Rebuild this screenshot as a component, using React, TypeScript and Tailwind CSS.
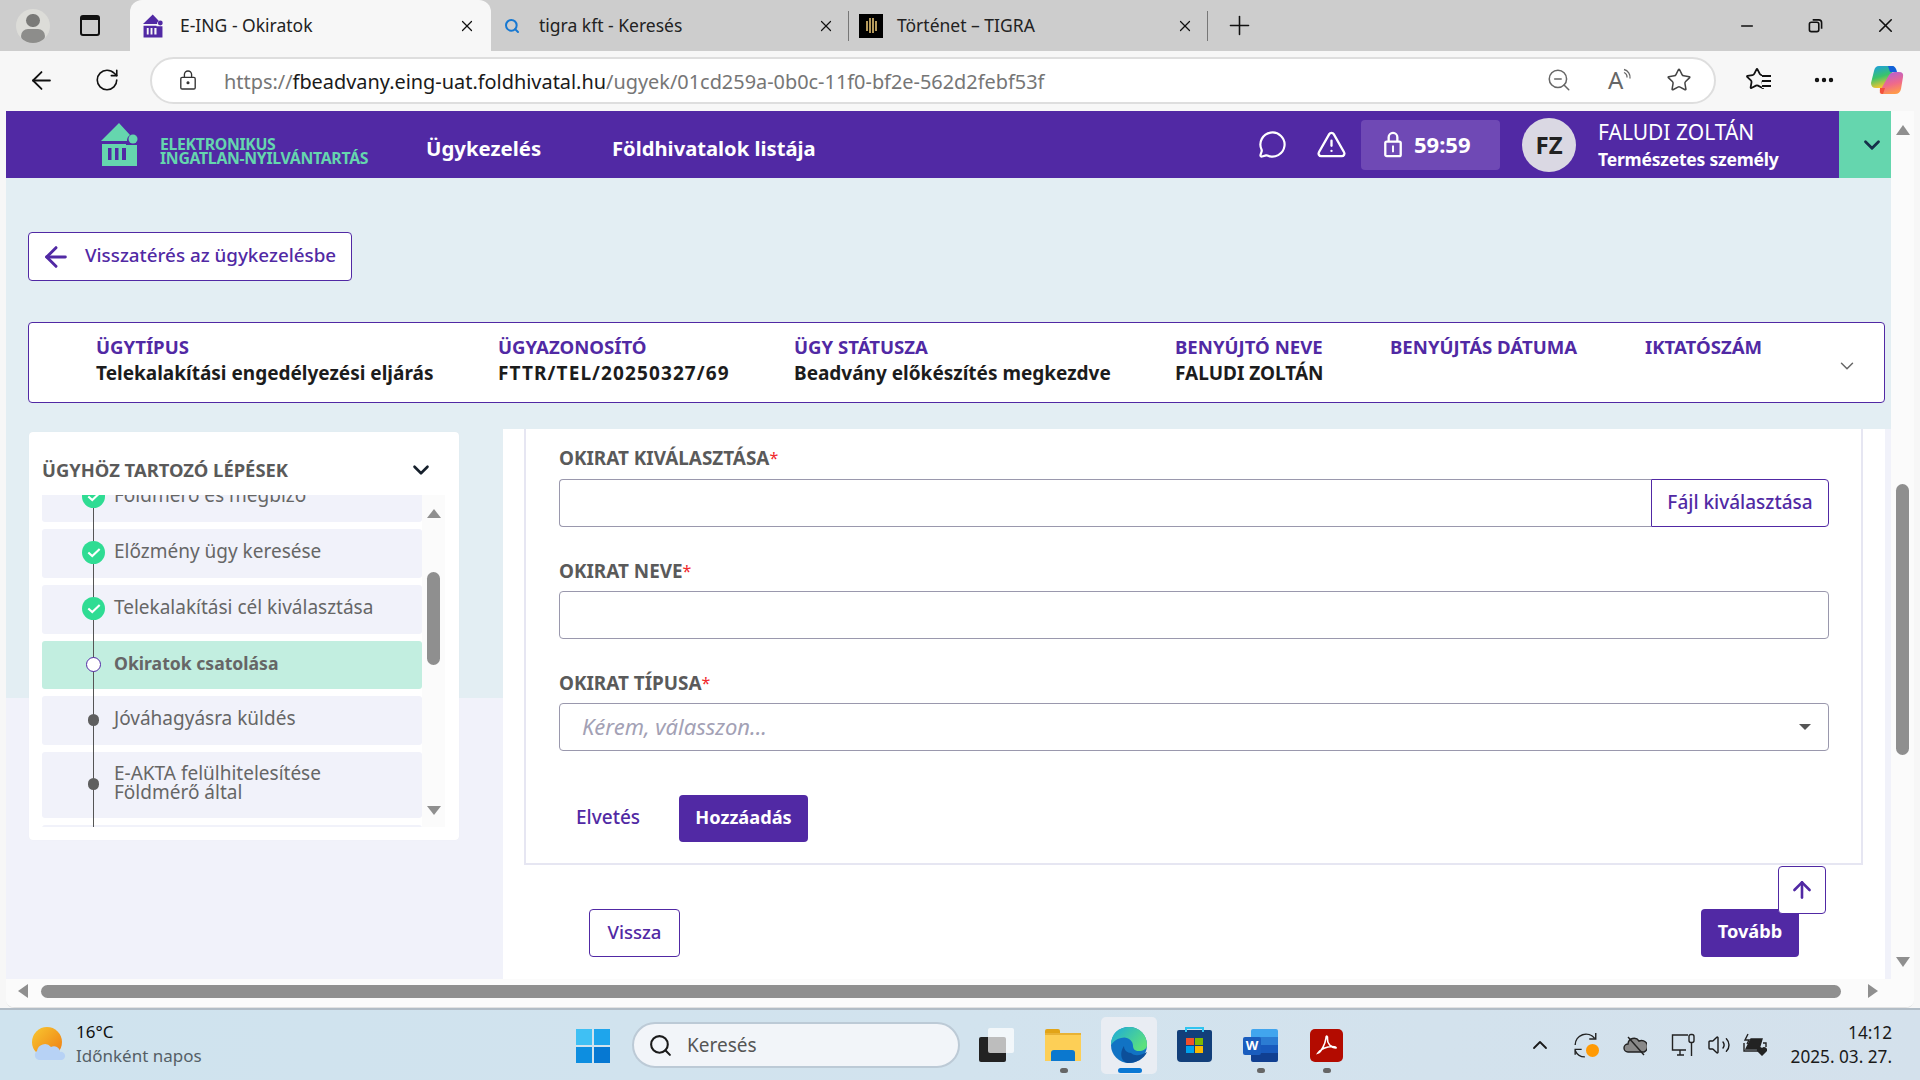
import { ArrowLeft, ArrowUp, ChevronDown, ChevronUp, MessageCircle, Minus, MoreHorizontal, Plus, RotateCw, Search, Star, TriangleAlert, Volume2, X, ZoomOut } from "lucide-react";

function HouseLogo({ color, className }: { color: string; className: string }) {
  return (
    <svg viewBox="0 0 37 43" className={className} fill={color}>
      <path d="M18 0 L29 12 A7 7 0 0 0 26 18 L0 18 Z" />
      <circle cx="32" cy="16" r="4.5" />
      <path d="M1 21 H25 V25 H21 V37 H25 V22 H28 V22 H36 V43 H1 Z M7 25 V37 H10.5 V25 Z M14 25 V37 H17.5 V25 Z" fillRule="evenodd" />
    </svg>
  );
}

function Tab({ active, width, title, icon, close }: { active?: boolean; width: string; title: string; icon: React.ReactNode; close: string }) {
  return (
    <div className={`${width} h-full flex items-center relative ${active ? "bg-[#f7f7f7] rounded-t-xl" : ""}`}>
      {icon}
      <span className="text-[17.5px] text-[#222]">{title}</span>
      <X className={`absolute ${close} w-[18px] h-[18px] text-[#111]`} strokeWidth={1.6} />
    </div>
  );
}

function TabStrip() {
  return (
    <div className="h-[51px] bg-[#cdcdcd] flex items-end shrink-0">
      <div className="w-[130px] h-full flex items-center">
        <div className="ml-[16px] w-[34px] h-[34px] rounded-full bg-[#dcdcd8] flex flex-col items-center overflow-hidden">
          <div className="mt-[5px] w-[14px] h-[15px] rounded-full bg-[#7a7a78]" />
          <div className="mt-[2px] w-[24px] h-[14px] rounded-full bg-[#8d8d8b]" />
        </div>
        <div className="ml-[30px] w-[20px] h-[21px] rounded-[3px] border-2 border-[#111] border-t-[5px]" />
      </div>
      <Tab active width="w-[361px]" title="E-ING - Okiratok" close="left-[328px]" icon={<HouseLogo color="#5129a4" className="ml-[13px] mr-[17px] w-[20px] h-[24px]" />} />
      <Tab width="w-[357px]" title="tigra kft - Keresés" close="left-[326px]" icon={<Search className="ml-[13px] mr-[19px] w-[16px] h-[16px] text-[#1678d2]" strokeWidth={3} />} />
      <div className="w-px h-[30px] bg-[#777] mb-[10px]" />
      <Tab width="w-[358px]" title="Történet – TIGRA" close="left-[327px]" icon={
        <div className="ml-[10px] mr-[14px] w-[24px] h-[24px] bg-black flex items-center justify-center gap-px">
          <div className="w-[2px] h-[10px] bg-[#b59a5c]" />
          <div className="w-[2px] h-[15px] bg-[#b59a5c]" />
          <div className="w-[2px] h-[15px] bg-[#b59a5c]" />
          <div className="w-[2px] h-[10px] bg-[#b59a5c]" />
        </div>
      } />
      <div className="w-px h-[30px] bg-[#777] mb-[10px]" />
      <div className="h-full flex items-center ml-[16px]">
        <Plus className="w-[31px] h-[31px] text-[#111]" strokeWidth={1.2} />
      </div>
      <div className="h-full flex items-center ml-auto">
        <Minus className="w-[18px] h-[18px] text-[#111] mr-[52px]" strokeWidth={2.2} />
        <svg viewBox="0 0 16 16" className="w-[15px] h-[15px] mr-[51px]" fill="none" stroke="#111" strokeWidth="1.7">
          <rect x="1.5" y="4.5" width="10" height="10" rx="2" />
          <path d="M5 2 H11.5 A3 3 0 0 1 14.5 5 V11.5" />
        </svg>
        <X className="w-[23px] h-[23px] text-[#111] mr-[23px]" strokeWidth={1.7} />
      </div>
    </div>
  );
}

function Toolbar() {
  return (
    <div className="h-[60px] flex items-center shrink-0 bg-[#f7f7f7] pb-[2px]">
      <ArrowLeft className="ml-[27px] w-[29px] h-[29px] text-[#111]" strokeWidth={1.5} />
      <RotateCw className="ml-[38px] w-[26px] h-[26px] text-[#111]" strokeWidth={1.5} />
      <div className="ml-[30px] w-[1566px] h-[47px] rounded-full bg-white border-2 border-[#dedede] flex items-center">
        <svg viewBox="0 0 20 24" className="ml-[27px] w-[18px] h-[22px]" fill="none" stroke="#333" strokeWidth="1.5">
          <rect x="2" y="9" width="16" height="13" rx="1.5" />
          <path d="M6 9 V6 A4 4 0 0 1 14 6 V9" />
          <circle cx="10" cy="15" r="1" fill="#333" />
        </svg>
        <span className="ml-[27px] mt-[4px] text-[19.9px] text-[#767676]">
          https://<span className="text-[#1a1a1a]">fbeadvany.eing-uat.foldhivatal.hu</span>/ugyek/01cd259a-0b0c-11f0-bf2e-562d2febf53f
        </span>
        <ZoomOut className="absolute left-[1546px] w-[26px] h-[26px] text-[#666]" strokeWidth={1.4} />
        <div className="absolute left-[1608px] flex items-start text-[#666]">
          <span className="text-[24px] leading-none">A</span>
          <svg viewBox="0 0 10 14" className="w-[10px] h-[15px]" fill="none" stroke="#666" strokeWidth="1.3">
            <path d="M1 1 A8 8 0 0 1 7 10 M1 4 A5 5 0 0 1 4 9" />
          </svg>
        </div>
        <Star className="absolute left-[1666px] w-[26px] h-[26px] text-[#444]" strokeWidth={1.4} />
      </div>
      <div className="ml-[29px] relative w-[26px] h-[26px]">
        <Star className="w-[24px] h-[24px] text-[#111]" strokeWidth={1.8} />
        <div className="absolute left-[17px] top-[7px] w-[9px] flex flex-col gap-[3px] bg-[#f7f7f7] py-px">
          <div className="h-[2px] bg-[#111]" />
          <div className="h-[2px] bg-[#111]" />
          <div className="h-[2px] bg-[#111]" />
        </div>
      </div>
      <MoreHorizontal className="ml-[41px] w-[24px] h-[24px] text-[#111]" strokeWidth={2.4} />
      <svg viewBox="0 0 34 32" className="ml-[34px] w-[34px] h-[32px]">
        <defs>
          <linearGradient id="cp1" x1="0" y1="0" x2="0.3" y2="1">
            <stop offset="0" stopColor="#1b9de8" />
            <stop offset="0.55" stopColor="#3bc46a" />
            <stop offset="1" stopColor="#f4c430" />
          </linearGradient>
          <linearGradient id="cp2" x1="0.2" y1="0" x2="0.5" y2="1">
            <stop offset="0" stopColor="#b05fd8" />
            <stop offset="0.6" stopColor="#f06a8a" />
            <stop offset="1" stopColor="#ff9a4a" />
          </linearGradient>
        </defs>
        <path d="M9 2 H22 Q25 2 24 5 L15 24 H6 Q1 24 1 19 L4 7 Q5 2 9 2 Z" fill="url(#cp1)" />
        <path d="M18 2 H23 Q26 3 27 8 H20 Z" fill="#1261d8" />
        <path d="M25 8 H29 Q34 8 33 13 L31 25 Q30 30 25 30 H12 Q9 30 10 27 L19 11 Q21 8 25 8 Z" fill="url(#cp2)" />
        <path d="M10 24 H15 L13 30 Q9 30 10 24 Z" fill="#f2503c" />
      </svg>
    </div>
  );
}

function AppHeader() {
  return (
    <div className="h-[67px] flex shrink-0">
      <div className="w-[1833px] bg-[#5129a4] flex items-center text-white">
        <HouseLogo color="#65d6ae" className="ml-[95px] w-[37px] h-[43px]" />
        <div className="ml-[22px] mt-[13px] w-[213px] text-[#65d6ae] text-[15.8px] font-bold leading-[14px] tracking-[-0.3px] whitespace-nowrap">
          <div>ELEKTRONIKUS</div>
          <div>INGATLAN-NYILVÁNTARTÁS</div>
        </div>
        <span className="ml-[53px] mt-[7px] w-[116px] text-[20.4px] font-bold whitespace-nowrap">Ügykezelés</span>
        <span className="ml-[70px] mt-[7px] w-[205px] text-[20.2px] font-bold whitespace-nowrap">Földhivatalok listája</span>
        <MessageCircle className="ml-[441px] w-[29px] h-[29px]" strokeWidth={1.8} />
        <TriangleAlert className="ml-[29px] w-[31px] h-[31px]" strokeWidth={1.8} />
        <div className="ml-[14px] w-[139px] h-[50px] rounded-[4px] bg-[#6f49b5] flex items-center">
          <svg viewBox="0 0 20 28" className="ml-[22px] w-[20px] h-[27px]" fill="none" stroke="white" strokeWidth="2.4">
            <rect x="2" y="11" width="16" height="15" rx="1.5" />
            <path d="M5.5 11 V6.5 A4.5 4.5 0 0 1 14.5 6.5 V11" />
            <path d="M10 15 V22" strokeWidth="2" />
          </svg>
          <span className="ml-[11px] text-[22px] font-bold">59:59</span>
        </div>
        <div className="ml-[22px] w-[54px] h-[54px] rounded-full bg-[#dad8e3] text-[#222] flex items-center justify-center text-[24px] font-bold">FZ</div>
        <div className="ml-[22px]">
          <div className="text-[21px] leading-[28px]">FALUDI ZOLTÁN</div>
          <div className="text-[17.5px] font-bold leading-[26px] tracking-[-0.2px]">Természetes személy</div>
        </div>
      </div>
      <div className="w-[52px] bg-[#65d6ae] flex items-center pl-[20px]">
        <ChevronDown className="w-[26px] h-[26px] text-[#16314a]" strokeWidth={2.6} />
      </div>
    </div>
  );
}

const infoColumns = [
  { label: "ÜGYTÍPUS", value: "Telekalakítási engedélyezési eljárás", width: "w-[402px]", valueClass: "" },
  { label: "ÜGYAZONOSÍTÓ", value: "FTTR/TEL/20250327/69", width: "w-[296px]", valueClass: "tracking-[1.1px]" },
  { label: "ÜGY STÁTUSZA", value: "Beadvány előkészítés megkezdve", width: "w-[381px]", valueClass: "" },
  { label: "BENYÚJTÓ NEVE", value: "FALUDI ZOLTÁN", width: "w-[215px]", valueClass: "" },
  { label: "BENYÚJTÁS DÁTUMA", value: "", width: "w-[255px]", valueClass: "" },
  { label: "IKTATÓSZÁM", value: "", width: "w-[190px]", valueClass: "" },
];

function InfoBox() {
  return (
    <div className="mt-[41px] w-[1857px] h-[81px] bg-white border border-[#5129a4] rounded-[4px] flex items-start pl-[67px] pt-[10px] relative">
      {infoColumns.map((c) => (
        <div key={c.label} className={`${c.width} shrink-0 leading-[27px]`}>
          <div className="text-[18.6px] font-bold text-[#5129a4]">{c.label}</div>
          <div className={`text-[19px] font-bold text-[#1c1c1c] ${c.valueClass}`}>{c.value}</div>
        </div>
      ))}
      <ChevronDown className="absolute left-[1807px] top-[32px] w-[22px] h-[22px] text-[#666]" strokeWidth={1.6} />
    </div>
  );
}

type StepState = "done" | "active" | "todo";

const steps: { text: React.ReactNode; state: StepState; height: string }[] = [
  { text: "Földmérő és megbízó", state: "done", height: "h-[49px]" },
  { text: "Előzmény ügy keresése", state: "done", height: "h-[49px]" },
  { text: "Telekalakítási cél kiválasztása", state: "done", height: "h-[49px]" },
  { text: "Okiratok csatolása", state: "active", height: "h-[48px]" },
  { text: "Jóváhagyásra küldés", state: "todo", height: "h-[49px]" },
  { text: <>E-AKTA felülhitelesítése<br />Földmérő által</>, state: "todo", height: "h-[66px]" },
  { text: "", state: "todo", height: "h-[49px]" },
];

function StepMarker({ state }: { state: StepState }) {
  if (state === "done") {
    return (
      <div className="w-[23px] h-[23px] rounded-full bg-[#2fdc93] flex items-center justify-center">
        <svg viewBox="0 0 16 12" className="w-[14px] h-[11px]" fill="none" stroke="white" strokeWidth="2.4">
          <path d="M1.5 6 L6 10 L14.5 2" />
        </svg>
      </div>
    );
  }
  if (state === "active") {
    return <div className="w-[15px] h-[15px] mx-[4px] rounded-full bg-white border border-[#5129a4]" />;
  }
  return <div className="w-[12px] h-[12px] mx-[6px] rounded-full bg-[#5f5f5f]" />;
}

function StepsPanel() {
  return (
    <div className="ml-[23px] mt-[3px] w-[430px] h-[408px] bg-white rounded-[4px] pl-[13px] shadow-[0_0_1px_rgba(0,0,0,0.05)]">
      <div className="h-[63px] pt-[12px] flex items-center justify-between pr-[25px]">
        <span className="text-[18.4px] font-bold text-[#5a5a5a]">ÜGYHÖZ TARTOZÓ LÉPÉSEK</span>
        <ChevronDown className="w-[26px] h-[26px] text-[#16202c]" strokeWidth={2.4} />
      </div>
      <div className="flex h-[332px] w-[403px] overflow-hidden">
        <div className="w-[380px] relative overflow-hidden">
          <div className="-mt-[22px] flex flex-col gap-[7px]">
            {steps.map((s, i) => (
              <div key={i} className={`${s.height} shrink-0 rounded-[3px] flex items-center pl-[40px] gap-[9px] ${s.state === "active" ? "bg-[#c2eee0]" : "bg-[#f1f2fa]"}`}>
                <div className="w-[23px] mb-[2px] flex justify-center relative z-10 shrink-0">
                  <StepMarker state={s.state} />
                </div>
                <span className={`mb-[4px] leading-[19px] text-[#666] ${s.state === "active" ? "text-[17.6px] font-bold text-[#555]" : "text-[19px]"}`}>{s.text}</span>
              </div>
            ))}
          </div>
          <div className="absolute left-[51px] top-0 bottom-0 w-px bg-[#555]" />
        </div>
        <div className="w-[23px] bg-[#fbfbfb] relative flex flex-col items-center">
          <div className="mt-[14px] w-0 h-0 border-x-[7px] border-x-transparent border-b-[9px] border-b-[#8f8f8f]" />
          <div className="mt-[54px] w-[13px] h-[93px] rounded-full bg-[#8f8f8f]" />
          <div className="mt-[141px] w-0 h-0 border-x-[7px] border-x-transparent border-t-[9px] border-t-[#8f8f8f]" />
        </div>
      </div>
    </div>
  );
}

function FieldLabel({ text }: { text: string }) {
  return (
    <div className="h-[22px] leading-[22px] text-[18.9px] font-bold text-[#5a5a5a]">
      {text}
      <span className="text-[#f0282d] align-top text-[16px] font-normal">*</span>
    </div>
  );
}

function FormCard() {
  return (
    <div className="ml-[21px] w-[1339px] h-[436px] border-x-2 border-b-2 border-[#e6e6f2] pl-[33px] pr-[32px] pt-[18px]">
      <FieldLabel text="OKIRAT KIVÁLASZTÁSA" />
      <div className="mt-[10px] h-[48px] flex">
        <div className="flex-1 border border-[#9a98ad] border-r-0 rounded-l-[4px]" />
        <div className="w-[178px] pb-[2px] border border-[#5129a4] rounded-r-[4px] flex items-center justify-center text-[19px] font-medium text-[#5129a4]">Fájl kiválasztása</div>
      </div>
      <div className="mt-[33px]">
        <FieldLabel text="OKIRAT NEVE" />
      </div>
      <div className="mt-[9px] h-[48px] border border-[#9a98ad] rounded-[4px]" />
      <div className="mt-[33px]">
        <FieldLabel text="OKIRAT TÍPUSA" />
      </div>
      <div className="mt-[9px] h-[48px] border border-[#9a98ad] rounded-[4px] flex items-center pl-[22px] pr-[17px]">
        <span className="mb-[2px] text-[22px] italic text-[#a3a1b5]">Kérem, válasszon...</span>
        <div className="ml-auto w-0 h-0 border-x-[6px] border-x-transparent border-t-[6px] border-t-[#555]" />
      </div>
      <div className="mt-[44px] flex items-center">
        <div className="w-[120px] pl-[17px] pb-[2px] text-[19px] font-medium text-[#5129a4]">Elvetés</div>
        <div className="w-[129px] h-[47px] pb-[2px] rounded-[4px] bg-[#5129a4] text-white flex items-center justify-center text-[18.2px] font-bold">Hozzáadás</div>
      </div>
    </div>
  );
}

function MainArea() {
  return (
    <div className="flex-1 flex flex-col min-w-0">
      <AppHeader />
      <div className="h-[251px] bg-[#e3eef3] px-[22px] pt-[54px] shrink-0">
        <div className="w-[324px] h-[49px] bg-white border border-[#5129a4] rounded-[4px] flex items-center pl-[11px] text-[#5129a4]">
          <ArrowLeft className="w-[32px] h-[32px]" strokeWidth={2.2} />
          <span className="ml-[13px] mb-[2px] text-[18.8px] font-medium">Visszatérés az ügykezelésbe</span>
        </div>
        <InfoBox />
      </div>
      <div className="h-[550px] flex shrink-0">
        <div className="w-[497px] bg-[linear-gradient(#e3eef3_269px,#f1f2fa_269px)]">
          <StepsPanel />
        </div>
        <div className="flex-1 bg-white border-r-[6px] border-[#f1f2fa] relative">
          <FormCard />
          <div className="mt-[44px] ml-[86px] w-[1210px] flex justify-between">
            <div className="w-[91px] h-[48px] pb-[2px] bg-white border border-[#5129a4] rounded-[4px] flex items-center justify-center text-[18.6px] font-medium text-[#5129a4]">Vissza</div>
            <div className="w-[98px] h-[48px] pb-[2px] bg-[#5129a4] rounded-[4px] flex items-center justify-center text-[18.2px] font-bold text-white">Tovább</div>
          </div>
          <div className="absolute left-[1275px] top-[437px] w-[48px] h-[48px] bg-white border border-[#5129a4] rounded-[4px] flex items-center justify-center">
            <ArrowUp className="w-[26px] h-[26px] text-[#5129a4]" strokeWidth={2.4} />
          </div>
        </div>
      </div>
    </div>
  );
}

function VerticalScrollbar() {
  return (
    <div className="w-[23px] flex flex-col items-center bg-[#fbfbfb]">
      <div className="mt-[14px] w-0 h-0 border-x-[7px] border-x-transparent border-b-[10px] border-b-[#8f8f8f]" />
      <div className="mt-[349px] w-[13px] h-[271px] rounded-full bg-[#8f8f8f]" />
      <div className="mt-[202px] w-0 h-0 border-x-[7px] border-x-transparent border-t-[10px] border-t-[#8f8f8f]" />
    </div>
  );
}

function HorizontalScrollbar() {
  return (
    <div className="h-[29px] flex items-center pb-[4px] bg-[#fbfbfb]">
      <div className="ml-[12px] w-0 h-0 border-y-[7px] border-y-transparent border-r-[10px] border-r-[#8f8f8f]" />
      <div className="ml-[13px] w-[1800px] h-[13px] rounded-full bg-[#8f8f8f]" />
      <div className="ml-[27px] w-0 h-0 border-y-[7px] border-y-transparent border-l-[10px] border-l-[#8f8f8f]" />
    </div>
  );
}

function TaskIcons() {
  return (
    <div className="flex items-center absolute left-[979px] top-0 h-full">
      {/* task view */}
      <div className="w-[35px] h-[34px] relative">
        <div className="absolute left-0 bottom-0 w-[27px] h-[25px] bg-[#222] rounded-[2px]" />
        <div className="absolute right-0 top-0 w-[26px] h-[25px] bg-white/70 rounded-[2px]" />
      </div>
      {/* folder */}
      <div className="ml-[31px] w-[36px] h-[32px] relative">
        <div className="absolute left-0 top-0 w-[15px] h-[8px] bg-[#e2a417] rounded-t-[2px]" />
        <div className="absolute left-0 top-[4px] right-0 bottom-0 bg-[#fdcf56] border-t-2 border-[#e8b235]" />
        <div className="absolute left-[6px] right-[6px] bottom-0 h-[11px] bg-[#0b78cf] rounded-t-[3px]" />
      </div>
      {/* edge */}
      <div className="ml-[20px] w-[56px] h-[57px] bg-[#e9edf3] rounded-[5px] flex items-center justify-center relative">
        <svg viewBox="0 0 36 36" className="w-[36px] h-[36px]">
          <defs>
            <linearGradient id="edge1" x1="0" y1="0" x2="1" y2="0.6">
              <stop offset="0" stopColor="#1ba9dd" />
              <stop offset="1" stopColor="#5be07e" />
            </linearGradient>
          </defs>
          <circle cx="18" cy="18" r="18" fill="#1173c4" />
          <path d="M0 18 C0 6 8 0 18 0 C29 0 36 8 36 18 C36 22 32 24 28 24 C24 24 22 22 22 19 C22 13 16 9 10 11 C5 12 2 15 0 18 Z" fill="url(#edge1)" />
          <path d="M20 26 C24 30 31 28 36 25 C33 32 25 36 18 36 C10 36 8 26 13 19 C13 23 16 26 20 26 Z" fill="#0c4f9a" />
        </svg>
        <div className="absolute bottom-[1px] left-[17px] w-[24px] h-[5px] rounded-full bg-[#0a78d4]" />
      </div>
      {/* store */}
      <div className="ml-[20px] mt-[2px] w-[35px] h-[32px] bg-[#123f7a] rounded-b-[4px] rounded-t-[2px] relative grid grid-cols-2 gap-px p-[9px] pt-[8px]">
        <div className="absolute left-[8px] -top-[3px] w-[19px] h-[5px] border-2 border-b-0 border-[#2fc4f0]" />
        <div className="bg-[#f2502a]" />
        <div className="bg-[#7fb900]" />
        <div className="bg-[#00a3ee]" />
        <div className="bg-[#fcb900]" />
      </div>
      {/* word */}
      <div className="ml-[31px] w-[35px] h-[33px] relative">
        <div className="absolute right-0 top-0 w-[27px] h-[33px] rounded-[2px] overflow-hidden flex flex-col">
          <div className="flex-1 bg-[#41a5ee]" />
          <div className="flex-1 bg-[#2b7cd3]" />
          <div className="flex-1 bg-[#185abd]" />
          <div className="flex-1 bg-[#103f91]" />
        </div>
        <div className="absolute left-0 top-[8px] w-[18px] h-[18px] bg-[#1a5dbe] rounded-[2px] text-white text-[13px] font-bold flex items-center justify-center">W</div>
      </div>
      {/* acrobat */}
      <div className="ml-[32px] w-[33px] h-[33px] bg-[#b30b00] rounded-[5px] flex items-center justify-center">
        <svg viewBox="0 0 24 24" className="w-[24px] h-[24px]" fill="none" stroke="white" strokeWidth="1.6">
          <path d="M3 20 C6 19 10 12 11 5 C11 2 13 3 12.5 6 C12 10 16 15 21 15 C22 14 18 13 13 14 C9 15 5 17 3 20 Z" />
        </svg>
      </div>
    </div>
  );
}

function Taskbar() {
  return (
    <div className="h-[72px] shrink-0 bg-[linear-gradient(90deg,#cfe3ee,#d2e3ee_50%,#d4e1ec)] border-t-2 border-[#b1bcc6] relative flex items-center">
      <svg viewBox="0 0 34 36" className="ml-[32px] w-[34px] h-[36px]">
        <defs>
          <linearGradient id="sun" x1="0" y1="0" x2="1" y2="1">
            <stop offset="0" stopColor="#f8c830" />
            <stop offset="1" stopColor="#ee7a12" />
          </linearGradient>
        </defs>
        <circle cx="15" cy="15" r="15" fill="url(#sun)" />
        <path d="M7 33 A5 5 0 0 1 5 24 A8 8 0 0 1 19 20 A6 6 0 0 1 28 25 A4 4 0 0 1 30 33 Z" fill="#b7d2f5" />
      </svg>
      <div className="ml-[10px] -mt-[2px] text-[17px] leading-[24px]">
        <div className="text-[#111]">16°C</div>
        <div className="text-[#555f66]">Időnként napos</div>
      </div>
      <div className="absolute left-[576px] top-[19px] w-[34px] h-[34px] grid grid-cols-2 gap-[2px]">
        <div className="bg-[#3fc0f4]" />
        <div className="bg-[#1ea5ec]" />
        <div className="bg-[#0d8ee0]" />
        <div className="bg-[#0678d2]" />
      </div>
      <div className="absolute left-[632px] top-[12px] w-[328px] h-[46px] rounded-full bg-[#f2f5f9] border-2 border-[#bccad6] flex items-center">
        <Search className="ml-[14px] w-[25px] h-[25px] text-[#1a1a1a]" strokeWidth={2} />
        <span className="ml-[14px] text-[19px] text-[#555]">Keresés</span>
      </div>
      <TaskIcons />
      <div className="absolute top-[58px] left-[1060px] w-[8px] h-[5px] rounded-full bg-[#666]" />
      <div className="absolute top-[58px] left-[1257px] w-[8px] h-[5px] rounded-full bg-[#666]" />
      <div className="absolute top-[58px] left-[1323px] w-[8px] h-[5px] rounded-full bg-[#666]" />
      <div className="ml-auto flex items-center text-[#1a1a1a]">
        <ChevronUp className="w-[24px] h-[24px]" strokeWidth={1.8} />
        <svg viewBox="0 0 24 24" className="ml-[21px] w-[26px] h-[26px]" fill="none" stroke="#222" strokeWidth="1.3">
          <path d="M20 6 A10 10 0 0 0 2 12" />
          <path d="M21 1 V6.5 H15" />
          <path d="M2 17 A10 10 0 0 0 11 23" />
          <path d="M8 16 H2 V21" />
          <circle cx="18" cy="17" r="6" fill="#ff9a05" stroke="none" />
        </svg>
        <svg viewBox="0 0 24 24" className="ml-[24px] w-[24px] h-[24px]" fill="#888" stroke="#222" strokeWidth="1.4">
          <path d="M5 19 A4 4 0 0 1 5 11 A6 6 0 0 1 16 8 A5 5 0 0 1 21 19 Z" />
          <path d="M5 4 L21 22" />
        </svg>
        <svg viewBox="0 0 24 24" className="ml-[24px] w-[24px] h-[24px]" fill="none" stroke="#222" strokeWidth="1.4">
          <path d="M17 2 H1.5 V17 H15 M6 22 H13 M9 17 V22" />
          <rect x="18" y="1.5" width="5" height="8" rx="2" />
          <path d="M20.5 9 V23" />
        </svg>
        <Volume2 className="ml-[12px] w-[24px] h-[24px]" strokeWidth={1.4} />
        <svg viewBox="0 0 24 24" className="ml-[12px] w-[24px] h-[24px]" fill="#222" stroke="#222" strokeWidth="1.4">
          <path d="M5 1 L2 7 H6 L4 11" fill="none" />
          <path d="M8 6 H19 L16 16 H3 Z" />
          <path d="M1 10 V18 H15" fill="none" />
          <path d="M20 10 H23 V14" fill="none" />
          <path d="M19 23 L14 18 A3 3 0 0 1 19 15 A3 3 0 0 1 24 18 Z" stroke="none" />
        </svg>
        <div className="ml-[24px] mr-[28px] text-right text-[17.2px] leading-[24px] text-[#1a1a1a]">
          <div>14:12</div>
          <div>2025. 03. 27.</div>
        </div>
      </div>
    </div>
  );
}

export default function App() {
  return (
    <div className="w-[1920px] h-[1080px] flex flex-col overflow-hidden bg-[#f7f7f7] font-['Noto_Sans',sans-serif]">
      <TabStrip />
      <div className="relative shrink-0">
        <Toolbar />
      </div>
      <div className="ml-[6px] w-[1908px] h-[897px] shrink-0 bg-[#fbfbfb] rounded-b-lg border-b border-[#e2e2e2] flex flex-col overflow-hidden">
        <div className="flex h-[868px] shrink-0">
          <MainArea />
          <VerticalScrollbar />
        </div>
        <HorizontalScrollbar />
      </div>
      <Taskbar />
    </div>
  );
}
